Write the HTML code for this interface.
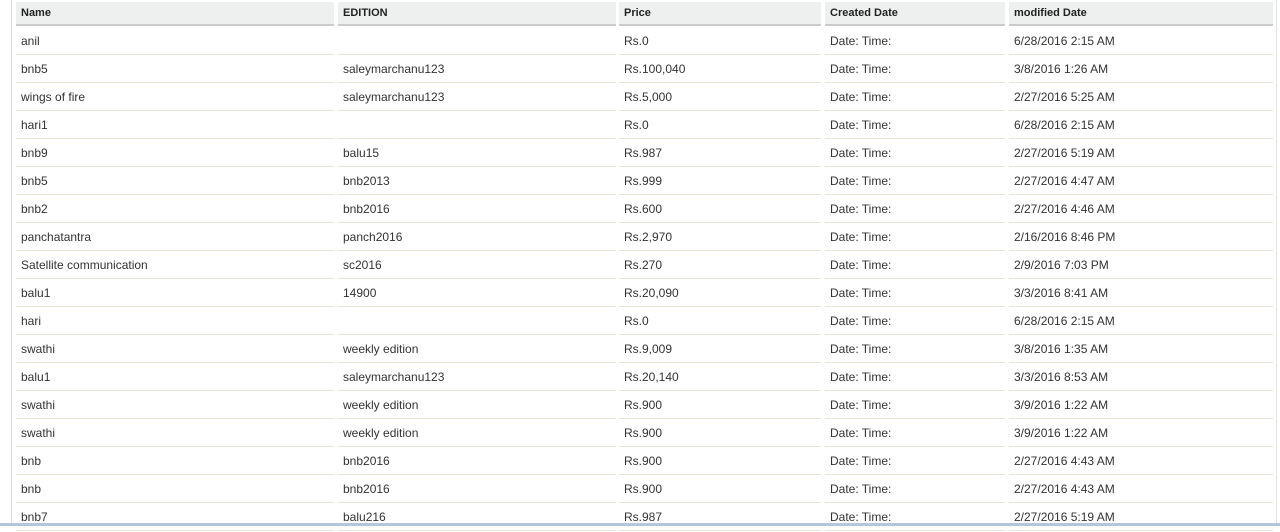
<!DOCTYPE html><html><head><style>
body{margin:0;width:1280px;height:526px;overflow:hidden;background:#fff;font-family:"Liberation Sans",Arial,sans-serif;font-size:12px;color:#333;position:relative}
.vl{position:absolute;left:11px;top:0;width:1px;height:526px;background:#dcdcdc}
.vr{position:absolute;left:1276px;top:0;width:1px;height:526px;background:#e4e4e4}
.c{position:absolute;box-sizing:border-box;padding-left:5px;white-space:nowrap}
.h{top:2px;height:24px;line-height:23px;background:#eef0f0;border-bottom:2px solid #ccc;font-weight:bold;font-size:11px;color:#222}
.r{height:28px;line-height:29px;border-bottom:1px solid #e6e6d6}
.bot{position:absolute;left:0;top:523px;width:1280px;height:3px;background:#b3c7dc}
</style></head><body>
<div class="vl"></div><div class="vr"></div>
<div id="t"></div>
<div class="bot"></div>
<script>
var cols=[[16,318],[338,278],[619,202],[825,180],[1009,264]];
var hd=["Name","EDITION","Price","Created Date","modified Date"];
var rows=[["anil","","Rs.0","6/28/2016 2:15 AM"],["bnb5","saleymarchanu123","Rs.100,040","3/8/2016 1:26 AM"],["wings of fire","saleymarchanu123","Rs.5,000","2/27/2016 5:25 AM"],["hari1","","Rs.0","6/28/2016 2:15 AM"],["bnb9","balu15","Rs.987","2/27/2016 5:19 AM"],["bnb5","bnb2013","Rs.999","2/27/2016 4:47 AM"],["bnb2","bnb2016","Rs.600","2/27/2016 4:46 AM"],["panchatantra","panch2016","Rs.2,970","2/16/2016 8:46 PM"],["Satellite communication","sc2016","Rs.270","2/9/2016 7:03 PM"],["balu1","14900","Rs.20,090","3/3/2016 8:41 AM"],["hari","","Rs.0","6/28/2016 2:15 AM"],["swathi","weekly edition","Rs.9,009","3/8/2016 1:35 AM"],["balu1","saleymarchanu123","Rs.20,140","3/3/2016 8:53 AM"],["swathi","weekly edition","Rs.900","3/9/2016 1:22 AM"],["swathi","weekly edition","Rs.900","3/9/2016 1:22 AM"],["bnb","bnb2016","Rs.900","2/27/2016 4:43 AM"],["bnb","bnb2016","Rs.900","2/27/2016 4:43 AM"],["bnb7","balu216","Rs.987","2/27/2016 5:19 AM"]];
var h="";
cols.forEach(function(c,i){h+='<div class="c h" style="left:'+c[0]+'px;width:'+c[1]+'px">'+hd[i]+'</div>';});
rows.forEach(function(r,j){var v=[r[0],r[1],r[2],"Date: Time:",r[3]];var y=27+j*28;
cols.forEach(function(c,i){h+='<div class="c r" style="top:'+y+'px;left:'+c[0]+'px;width:'+c[1]+'px">'+v[i]+'</div>';});});
document.getElementById("t").innerHTML=h;
</script>
</body></html>
